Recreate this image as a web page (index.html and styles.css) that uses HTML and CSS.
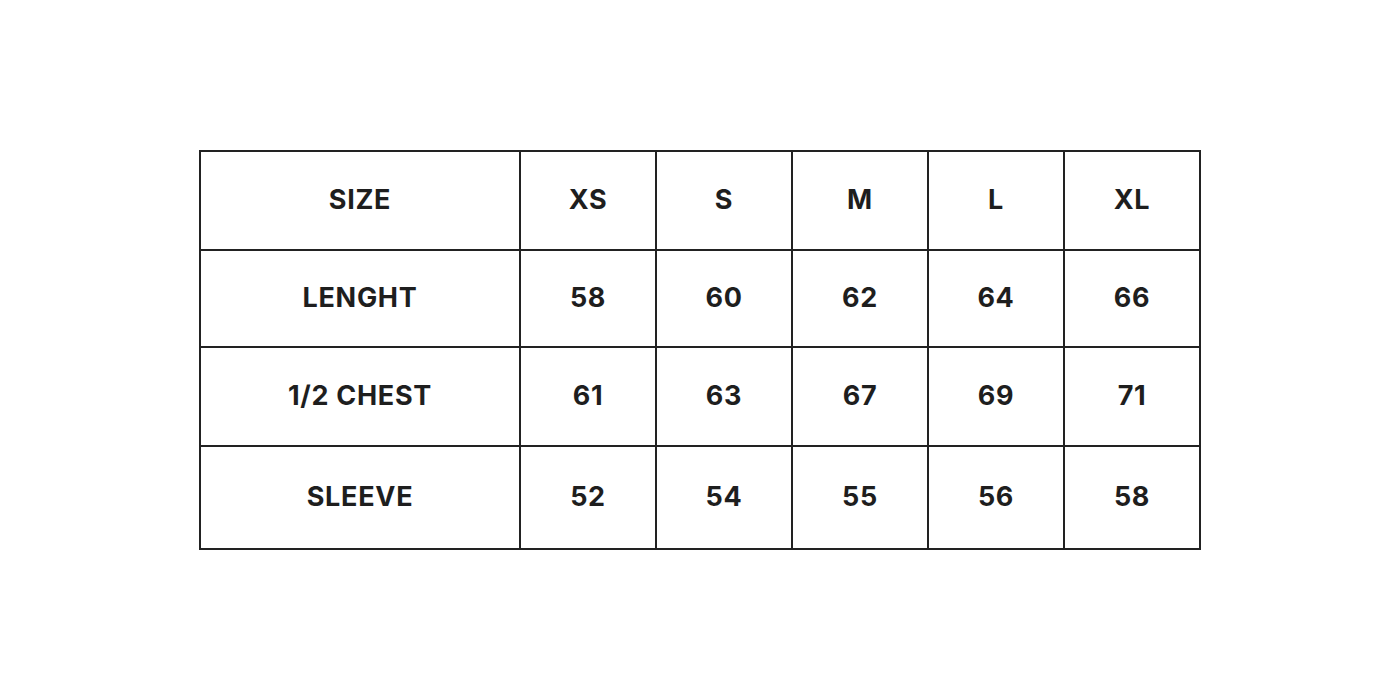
FILE: index.html
```html
<!DOCTYPE html>
<html>
<head>
<meta charset="utf-8">
<link rel="stylesheet" href="styles.css">
</head>
<body>
<main class="page">
<table class="size-table">
  <colgroup>
    <col class="col-label"><col class="col-size"><col class="col-size"><col class="col-size"><col class="col-size"><col class="col-size">
  </colgroup>
  <tr class="r1"><td>SIZE</td><td>XS</td><td>S</td><td>M</td><td>L</td><td>XL</td></tr>
  <tr class="r2"><td>LENGHT</td><td>58</td><td>60</td><td>62</td><td>64</td><td>66</td></tr>
  <tr class="r3"><td>1/2 CHEST</td><td>61</td><td>63</td><td>67</td><td>69</td><td>71</td></tr>
  <tr class="r4"><td>SLEEVE</td><td>52</td><td>54</td><td>55</td><td>56</td><td>58</td></tr>
</table>
</main>
</body>
</html>
```
FILE: styles.css
```css
html, body {
  margin: 0;
  background: #fff;
}
.page {
  padding: 150px 0 0 199px;
}
.size-table {
  border-collapse: collapse;
  table-layout: fixed;
  width: 1002px;
  font-family: Inter, "Liberation Sans", sans-serif;
  font-weight: 700;
  font-size: 27px;
  color: #1e1e1e;
}
.col-label { width: 320px; }
.col-size { width: 136px; }
.size-table td {
  border: 2px solid #222;
  text-align: center;
  vertical-align: middle;
  padding: 0 0 2px 0;
  letter-spacing: 0.7px;
}
.r1 td { height: 95px; }
.r2 td { height: 93px; }
.r3 td { height: 95px; }
.r4 td { height: 99px; }
```
